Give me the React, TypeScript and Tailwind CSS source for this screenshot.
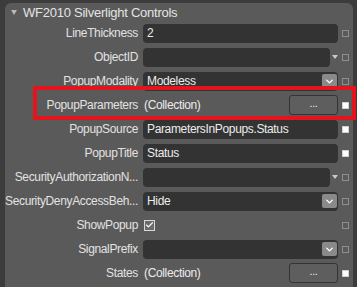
import React from "react";
import { ChevronDown, Check } from "lucide-react";

type Kind = "text" | "combo" | "select" | "collection" | "check";

interface Prop {
  label: string;
  kind: Kind;
  value?: string;
  set?: boolean;
}

const props: Prop[] = [
  { label: "LineThickness", kind: "text", value: "2" },
  { label: "ObjectID", kind: "combo" },
  { label: "PopupModality", kind: "select", value: "Modeless" },
  { label: "PopupParameters", kind: "collection", set: true },
  { label: "PopupSource", kind: "text", value: "ParametersInPopups.Status", set: true },
  { label: "PopupTitle", kind: "text", value: "Status", set: true },
  { label: "SecurityAuthorizationN...", kind: "combo" },
  { label: "SecurityDenyAccessBeh...", kind: "select", value: "Hide" },
  { label: "ShowPopup", kind: "check" },
  { label: "SignalPrefix", kind: "select" },
  { label: "States", kind: "collection", set: true },
];

function Marker({ set }: { set?: boolean }) {
  return set ? (
    <div className="w-[7px] h-[7px] bg-white border border-[#d0d0d0]" />
  ) : (
    <div className="w-[7px] h-[7px] border border-[#8e8e8e]" />
  );
}

function Editor({ p }: { p: Prop }) {
  if (p.kind === "text") {
    return (
      <div className="w-[195px] h-[19px] rounded-[4px] bg-[#333333] px-[4px] flex items-center text-[#ececec]">
        {p.value}
      </div>
    );
  }
  if (p.kind === "combo") {
    return (
      <div className="w-[195px] h-[19px] flex items-center">
        <div className="w-[189px] h-[19px] rounded-[4px] bg-[#333333]" />
        <span className="ml-[2px] w-0 h-0 border-l-[3px] border-r-[3px] border-t-[4px] border-l-transparent border-r-transparent border-t-[#c8c8c8]" />
      </div>
    );
  }
  if (p.kind === "select") {
    return (
      <div className="w-[195px] h-[19px] rounded-[4px] bg-[#333333] flex items-center text-[#ececec]">
        <span className="flex-1 px-[4px]">{p.value}</span>
        <div className="w-[15px] h-[14px] mr-[1px] rounded-[2px] bg-[#8a8a8a] flex items-center justify-center">
          <ChevronDown size={11} strokeWidth={3} className="text-white" />
        </div>
      </div>
    );
  }
  if (p.kind === "check") {
    return (
      <div className="w-[195px] h-[19px] flex items-center pl-[1px]">
        <div className="w-[11px] h-[11px] border border-[#d8d8d8] bg-[#6a6a6a] flex items-center justify-center">
          <Check size={10} strokeWidth={3} className="text-white" />
        </div>
      </div>
    );
  }
  return (
    <div className="w-[195px] h-[19px] flex items-center text-[#ececec]">
      <span className="flex-1 pl-[1px]">(Collection)</span>
      <div className="w-[49px] h-[20px] rounded-[3px] border border-[#333333] bg-[#5e5e5e] flex items-center justify-center text-[11px] leading-none pb-[3px]">
        ...
      </div>
    </div>
  );
}

export default function App() {
  return (
    <div
      className="relative w-[357px] h-[287px] bg-[#3c3c3c] pt-[3px] pl-[5px] pr-[4px] overflow-hidden text-[12px] leading-none tracking-[-0.35px]"
      style={{ fontFamily: '"Liberation Sans", Arial, sans-serif' }}
    >
      <div className="h-full rounded-t-[6px] bg-[#5a5a5a]">
        <div className="h-[18px] flex items-center pl-[6px] text-[#e4e4e4] text-[13px] tracking-[-0.25px]">
          <span className="w-0 h-0 border-l-[3px] border-r-[3px] border-t-[5px] border-l-transparent border-r-transparent border-t-[#b8b8b8] mr-[6px]" />
          WF2010 Silverlight Controls
        </div>
        <div className="flex flex-col">
          {props.map((p) => (
            <div key={p.label} className="h-[24px] flex items-center">
              <div className="w-[138px] pr-[5px] text-right text-[#e2e2e2] whitespace-nowrap">
                {p.label}
              </div>
              <Editor p={p} />
              <div className="ml-[4px]">
                <Marker set={p.set} />
              </div>
            </div>
          ))}
        </div>
      </div>
      {/* highlight annotation */}
      <div className="absolute left-[33px] top-[86px] w-[323px] h-[34px] border-[4px] border-[#e3141c]" />
    </div>
  );
}
